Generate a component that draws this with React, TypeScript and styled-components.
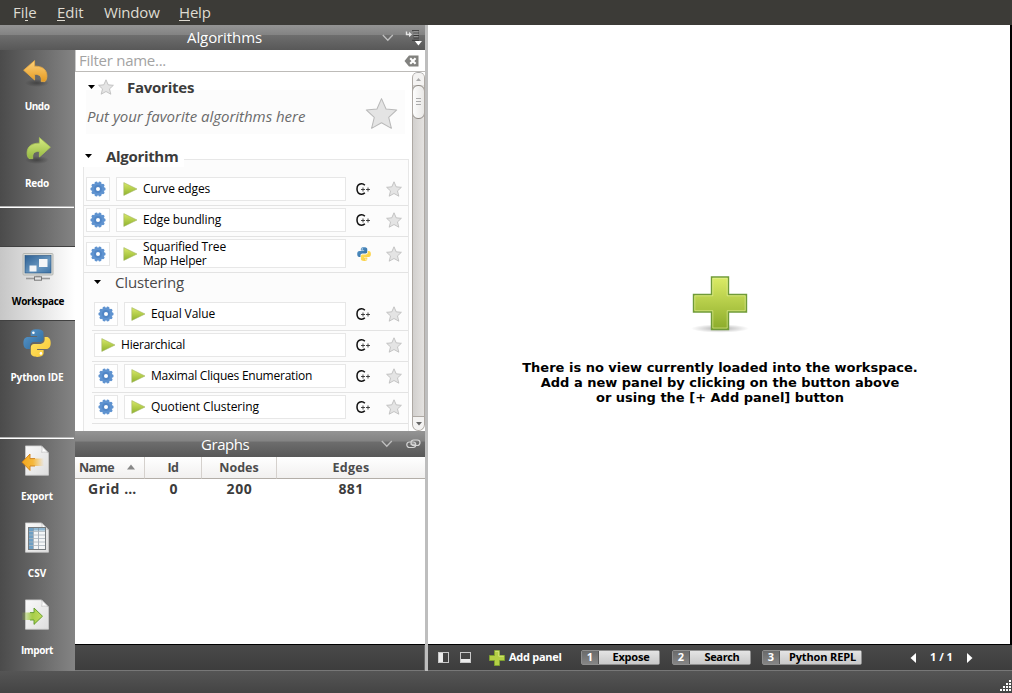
import React from 'react';
import styled, { createGlobalStyle } from 'styled-components';

const GlobalStyle = createGlobalStyle`
  * { box-sizing: border-box; }
  body { margin: 0; background: #fff; overflow: hidden; font-family: "Open Sans", "Noto Sans", sans-serif; color: #3c3c3c; }
  svg { display: block; flex: none; }
`;

const Window = styled.div`
  width: 1012px;
  height: 693px;
  display: flex;
  flex-direction: column;
`;

/* Text whose tracking is tuned per label */
const Label = styled.span<{ $ls?: number }>`
  letter-spacing: ${(p) => p.$ls ?? 0}px;
  white-space: pre;
`;

const MenuBar = styled.nav`
  height: 25px;
  flex: none;
  display: flex;
  padding-left: 13px;
  background: #3c3b37;
  color: #dfdbd2;
  font-size: 15px;
  line-height: 25px;
`;
const MenuItem = styled.div<{ $w: number }>`
  width: ${(p) => p.$w}px;
`;
const Mnemonic = styled.span`
  display: inline-block;
  height: 21px;
  line-height: 25px;
  vertical-align: top;
  border-bottom: 1px solid #dfdbd2;
`;

const Body = styled.div`
  height: 646px;
  flex: none;
  display: flex;
`;
const LeftPane = styled.div`
  width: 425px;
  display: flex;
  flex-direction: column;
`;
const LeftColumns = styled.div`
  flex: 1;
  display: flex;
  min-height: 0;
`;
const Splitter = styled.div`
  width: 3px;
  background: #bebebe;
`;

const TitleBar = styled.header<{ $h: number; $inset: number; $right: number; $gap: number }>`
  height: ${(p) => p.$h}px;
  flex: none;
  display: flex;
  align-items: center;
  gap: ${(p) => p.$gap}px;
  padding: 0 ${(p) => p.$right}px 0 ${(p) => p.$inset}px;
  background: linear-gradient(#949494 0, #838383 39%, #6d6d6d 42%, #585858 100%);
  color: #fff;
  font-size: 15px;
  line-height: 25px;
`;
const TitleText = styled.div`
  flex: 1;
`;

const SideBar = styled.aside`
  width: 75px;
  flex: none;
  display: flex;
  flex-direction: column;
  background: linear-gradient(90deg, #4b4b4b, #848484);
`;
const SideGroup = styled.div<{ $h: number; $top?: number; $line?: boolean }>`
  height: ${(p) => p.$h}px;
  flex: none;
  padding-top: ${(p) => p.$top ?? 0}px;
  position: relative;
  &::after {
    content: '';
    display: ${(p) => (p.$line ? 'block' : 'none')};
    position: absolute;
    left: 0;
    bottom: 0;
    width: 74px;
    height: 2px;
    background: linear-gradient(#b5b5b5 50%, #fff 50%);
  }
`;
const SideButton = styled.button<{ $h?: number; $active?: boolean; $gap: number }>`
  all: unset;
  box-sizing: border-box;
  width: 75px;
  height: ${(p) => p.$h ?? 77}px;
  display: flex;
  flex-direction: column;
  align-items: center;
  padding: ${(p) => (p.$active ? `${p.$gap}px 0 0 1px` : `${p.$gap}px 1px 0 0`)};
  font-size: 10px;
  font-weight: 700;
  line-height: 14px;
  color: ${(p) => (p.$active ? '#000' : '#fff')};
  background: ${(p) => (p.$active ? 'linear-gradient(90deg, #c6c6c6, #fff)' : 'none')};
  border-top: ${(p) => (p.$active ? '1px solid #414141' : '0')};
  border-bottom: ${(p) => (p.$active ? '1px solid #414141' : '0')};
`;
const SideIcon = styled.div<{ $h: number }>`
  height: ${(p) => p.$h}px;
  flex: none;
`;

const DockColumn = styled.div`
  width: 350px;
  display: flex;
  flex-direction: column;
`;
const FilterField = styled.div`
  height: 22px;
  flex: none;
  display: flex;
  align-items: center;
  justify-content: space-between;
  padding: 0 6px 0 4px;
  background: #fff;
  border-bottom: 1px solid #bdbbb8;
  box-shadow: inset 1px 0 #c9c9c9;
  color: #a3a3a3;
  font-size: 15px;
  line-height: 21px;
`;
const Browser = styled.div`
  height: 359px;
  flex: none;
  display: flex;
  justify-content: space-between;
  background: #fff;
`;
const Tree = styled.div`
  width: 334px;
  height: 359px;
  overflow: hidden;
  padding-left: 8px;
`;
const SectionHead = styled.div<{ $h: number; $pad: string }>`
  height: ${(p) => p.$h}px;
  display: flex;
  align-items: center;
  padding: ${(p) => p.$pad};
  font-size: 15px;
  font-weight: 700;
  line-height: 20px;
`;
const SectionIcon = styled.div<{ $gap: number }>`
  margin-right: ${(p) => p.$gap}px;
`;
const Favorites = styled.div`
  height: 44px;
  margin: 0 4px 12px 3px;
  display: flex;
  justify-content: space-between;
  padding-right: 7px;
  background: #fcfcfc;
  color: #6b6b6b;
  font-size: 15px;
  font-style: italic;
  line-height: 20px;
`;
const FavoritesHint = styled.div`
  padding: 16px 0 0 1px;
`;
const FavoritesStar = styled.div`
  padding-top: 7px;
`;
const HeadRule = styled.div`
  flex: 1;
  height: 8px;
  align-self: flex-end;
  margin: 0 0 -2px 6px;
  border: solid #e7e7e7;
  border-width: 1px 1px 0 0;
  background: #fcfcfc;
`;
const Group = styled.div`
  width: 326px;
  height: 300px;
  border: solid #e7e7e7;
  border-width: 0 1px;
  background: #fcfcfc;
  padding-top: 8px;
  font-size: 12px;
  color: #000;
`;
const SubHead = styled.div`
  height: 27px;
  display: flex;
  gap: 14px;
  padding: 0 0 0 10px;
  color: #4a4a4a;
  font-size: 15px;
  line-height: 18px;
`;
const SubHeadMarker = styled.div`
  padding-top: 7px;
`;
const AlgoRow = styled.div<{ $h: number; $indent?: boolean }>`
  height: ${(p) => p.$h}px;
  margin-left: ${(p) => (p.$indent ? 8 : 0)}px;
  padding: 2px 6px 4px 2px;
  display: flex;
  align-items: center;
  border-bottom: 1px solid #e3e3e3;
`;
const GearButton = styled.div`
  width: 24px;
  height: 24px;
  flex: none;
  margin-right: 6px;
  border: 1px solid #e7e7e7;
  background: #fff;
  display: grid;
  place-items: center;
`;
const RunButton = styled.div`
  flex: 1;
  height: 100%;
  border: 1px solid #e7e7e7;
  background: #fff;
  display: flex;
  align-items: center;
  gap: 5px;
  padding-left: 6px;
  line-height: 14px;
`;
const LangBadge = styled.div`
  width: 36px;
  margin-right: 4px;
  display: grid;
  place-items: center;
`;

const ScrollBar = styled.div`
  width: 13px;
  display: flex;
  flex-direction: column;
  border: 1px solid #aea9a4;
  border-top-color: #aaa;
  border-radius: 7px 7px 8px 8px;
  background: linear-gradient(90deg, #d2d0ce, #e4e2e0);
  overflow: hidden;
`;
const ScrollArrow = styled.div<{ $h: number; $down?: boolean }>`
  height: ${(p) => p.$h}px;
  flex: none;
  display: grid;
  place-items: center;
  background: #f4f3f2;
  ${(p) => p.$down && 'margin-top: auto; border-top: 1px solid #aea9a4; border-radius: 0 0 7px 7px;'}
`;
const ScrollThumb = styled.div`
  height: 34px;
  margin: 0 -1px;
  flex: none;
  border: 1px solid #918c87;
  border-radius: 6px;
  background: linear-gradient(90deg, #fdfdfd, #e9e8e6);
  display: grid;
  place-items: center;
`;

const GraphTable = styled.table`
  width: 350px;
  table-layout: fixed;
  border-collapse: separate;
  border-spacing: 0;
  font-weight: 700;
  color: #3c3c3c;
  text-align: center;
  background: #fff;
`;
const HeadCell = styled.th<{ $w: number; $first?: boolean }>`
  width: ${(p) => p.$w}px;
  height: 22px;
  padding: 1px 0 0 ${(p) => (p.$first ? 4 : 0)}px;
  text-align: ${(p) => (p.$first ? 'left' : 'center')};
  font-size: 12.5px;
  line-height: 20px;
  color: #4c4c4c;
  border-bottom: 1px solid #b3aea8;
  border-right: 1px solid #d5d1cd;
  background: linear-gradient(#fff, #f1f0ef);
  &:last-child { border-right: 0; }
`;
const HeadInner = styled.div`
  display: flex;
  align-items: center;
  justify-content: space-between;
  padding-right: 9px;
`;
const SortMark = styled.div`
  margin-bottom: 3px;
`;
const Cell = styled.td<{ $first?: boolean }>`
  height: 20px;
  padding: 0 0 0 ${(p) => (p.$first ? 13 : 0)}px;
  text-align: ${(p) => (p.$first ? 'left' : 'center')};
  font-size: 14px;
  line-height: 20px;
`;
const TableArea = styled.div`
  flex: 1;
  background: #fff;
`;
const DockFooter = styled.div`
  height: 27px;
  flex: none;
  border-top: 1px solid #000;
  border-bottom: 1px solid #777;
  background: linear-gradient(#494949, #3d3d3d);
  box-shadow: inset -1px 0 #666;
`;

const Workspace = styled.main`
  width: 584px;
  display: flex;
  flex-direction: column;
`;
const Canvas = styled.section`
  flex: 1;
  border-right: 2px solid #000;
  background: #fff;
  display: flex;
  flex-direction: column;
  align-items: center;
  padding: 248px 0 0 2px;
  color: #000;
  font: 700 13px/15px "DejaVu Sans", sans-serif;
  text-align: center;
`;
const Message = styled.p`
  margin: 27px 0 0;
`;
const PanelBar = styled.footer`
  height: 27px;
  flex: none;
  display: flex;
  align-items: center;
  padding-left: 10px;
  border-top: 1px solid #000;
  border-bottom: 1px solid #777;
  background: linear-gradient(#494949, #3d3d3d);
  color: #fff;
  font-size: 11px;
  font-weight: 700;
  line-height: 14px;
`;
const BarLabel = styled(Label)`
  display: block;
  padding-bottom: 2px;
`;
const AddPanel = styled.div`
  display: flex;
  align-items: center;
  gap: 4px;
  width: 92px;
  margin-left: 18px;
`;
const PanelTab = styled.div<{ $w: number; $gap: number }>`
  width: ${(p) => p.$w}px;
  height: 15px;
  margin-right: ${(p) => p.$gap}px;
  display: flex;
  border: 1px solid #8e8e8e;
  border-radius: 2px;
  line-height: 12px;
  text-align: center;
`;
const TabNumber = styled.div`
  width: 17px;
  background: linear-gradient(#6a6a6a, #858585);
  border-right: 1px solid #555;
`;
const TabName = styled.div`
  flex: 1;
  padding-left: 4px;
  color: #000;
  background: linear-gradient(#e4e4e4, #c8c8c8);
`;
const Pager = styled.div`
  display: flex;
  align-items: center;
  gap: 14px;
`;
const StatusBar = styled.div`
  height: 22px;
  flex: none;
  display: flex;
  justify-content: flex-end;
  align-items: flex-end;
  padding: 0 1px 2px 0;
  background: linear-gradient(#555, #444);
`;

const STAR = 'M8 .8 10.2 5.8 15.4 6.3 11.5 9.9 12.8 15.2 8 12.5 3.2 15.2 4.5 9.9 .6 6.3 5.8 5.8Z';
const Star = ({ size = 16 }: { size?: number }) => (
  <svg width={size} height={size} viewBox="0 0 16 16">
    <path d={STAR} fill="#e4e4e4" stroke="#b9b9b9" strokeWidth={size > 20 ? 0.5 : 0.8} strokeLinejoin="round" />
  </svg>
);

const Triangle = () => (
  <svg width="7" height="4" viewBox="0 0 7 4"><path d="M0 0H7L3.5 4Z" fill="#000" /></svg>
);

const Gear = () => (
  <svg width="16" height="16" viewBox="0 0 16 16">
    <g fill="#5f93d0">
      {Array.from({ length: 10 }, (_, i) => (
        <circle key={i} cx="8" cy="2" r="1.65" transform={`rotate(${i * 36 + 18} 8 8)`} />
      ))}
      <circle cx="8" cy="8" r="6.2" />
    </g>
    <circle cx="8" cy="8" r="3.9" fill="#5186c6" />
    <circle cx="8" cy="8" r="2" fill="#fff" />
  </svg>
);

const Play = () => (
  <svg width="15" height="14" viewBox="0 0 15 14">
    <defs>
      <linearGradient id="play" x1="0" y1="0" x2="0" y2="1"><stop stopColor="#d8e868" /><stop offset="1" stopColor="#8fb32d" /></linearGradient>
    </defs>
    <path d="M.8.6 14 7 .8 13.4Z" fill="url(#play)" stroke="#a3b565" strokeWidth=".6" />
  </svg>
);

const Cpp = () => (
  <svg width="16" height="14" viewBox="1 0 16 14">
    <path d="M9.8 3.2C8.8 2 7.6 1.7 6.3 1.8 3.5 2 2 4.1 2 7S3.5 12 6.3 12.2C7.7 12.3 8.9 11.9 9.8 10.8" fill="none" stroke="#111" strokeWidth="1.5" />
    <path d="M6 7.5H10M8 5.5V9.5M11 7.5H15M13 5.5V9.5" stroke="#333" strokeWidth=".9" />
  </svg>
);

const Python = ({ size }: { size: number }) => (
  <svg width={size} height={size} viewBox="0 0 28 28">
    <defs>
      <linearGradient id="pyb" x1="0" y1="0" x2="1" y2="1"><stop stopColor="#5a9bd0" /><stop offset="1" stopColor="#2d6698" /></linearGradient>
      <linearGradient id="pyy" x1="0" y1="0" x2="1" y2="1"><stop stopColor="#ffe468" /><stop offset="1" stopColor="#f9c832" /></linearGradient>
    </defs>
    <path d="M13.8.3C9.5.3 7.7 1.6 7.7 4V7H14.2V8H5C2 8 .4 10.3.4 14S2 20 4.6 20H7V16.7C7 14.6 8.7 13 10.8 13H17.2C19.1 13 20.5 11.5 20.5 9.7V4C20.5 1.6 18 .3 13.8.3Z" fill="url(#pyb)" />
    <path d="M14.4 27.9C18.7 27.9 20.6 26.5 20.6 24.1V21H14.1V20H23.2C26.2 20 27.7 17.6 27.7 14S26.2 8 23.6 8H21.6V11C21.6 13 19.6 14.9 17.5 14.9H11C9.2 14.9 7.8 16.4 7.8 18.2V24C7.8 26.4 10.2 27.9 14.4 27.9Z" fill="url(#pyy)" />
    <circle cx="10.4" cy="3.8" r="1.3" fill="#fff" />
    <circle cx="17.9" cy="24.4" r="1.3" fill="#fff" />
  </svg>
);

const BentArrow = ({ redo }: { redo?: boolean }) => {
  const id = redo ? 'redo' : 'undo';
  return (
    <svg width="28" height="28" viewBox="0 0 28 28">
      <defs>
        <linearGradient id={id} x1="0" y1="0" x2="0" y2="1">
          <stop stopColor={redo ? '#d8ec84' : '#ffd27c'} />
          <stop offset="1" stopColor={redo ? '#94b840' : '#e59a20'} />
        </linearGradient>
        <radialGradient id={`${id}s`}><stop stopColor="#000" stopOpacity=".35" /><stop offset="1" stopColor="#000" stopOpacity="0" /></radialGradient>
      </defs>
      <g transform={redo ? 'translate(28 0) scale(-1 1)' : undefined}>
        <ellipse cx="14" cy="23" rx="12" ry="4" fill={`url(#${id}s)`} />
        <path
          d="M0.6 10.2 11.6.6V6.2C19.5 6 23.6 9.5 23.9 15.5 24 18.3 23.2 20.3 22 21.6H18.2C18.9 16.5 16.8 14.2 11.6 14.4V20Z"
          fill={`url(#${id})`} stroke={redo ? '#a8c656' : '#e9ab42'} strokeWidth=".8" strokeLinejoin="round"
        />
      </g>
    </svg>
  );
};

const Monitor = () => (
  <svg width="32" height="28" viewBox="0 0 32 28">
    <defs><linearGradient id="scr" x1="0" y1="0" x2="1" y2="1"><stop stopColor="#2b5f94" /><stop offset=".6" stopColor="#6a98c0" /><stop offset="1" stopColor="#3d73a6" /></linearGradient></defs>
    <rect x="1" y=".5" width="30" height="21.5" rx="1" fill="#d8dad6" stroke="#b4b6b2" />
    <rect x="3" y="2.5" width="26" height="17.5" fill="url(#scr)" stroke="#255380" strokeWidth=".6" />
    <rect x="17" y="6" width="8.5" height="8" fill="#f3f5f7" />
    <rect x="7.5" y="12.5" width="7" height="6" fill="#f3f5f7" />
    <rect x="14" y="22" width="4" height="3" fill="#c3c3c3" />
    <path d="M4 25.5H28" stroke="#999" strokeWidth="1.6" />
    <rect x="12.5" y="23.8" width="7" height="3.4" fill="#e3e3e3" stroke="#777" />
  </svg>
);

const Sheet = ({ kind }: { kind: 'export' | 'csv' | 'import' }) => (
  <svg width="32" height="32" viewBox="0 0 32 32">
    <defs>
      <linearGradient id="page" x1="0" y1="0" x2="1" y2="1"><stop stopColor="#fafafa" /><stop offset="1" stopColor="#dedede" /></linearGradient>
      <linearGradient id="oarrow" x1="0" x2="1"><stop stopColor="#f3a71c" /><stop offset=".5" stopColor="#f5b83c" /><stop offset="1" stopColor="#f5b83c" stopOpacity="0" /></linearGradient>
      <linearGradient id="garrow" x1="0" x2="1"><stop stopColor="#9ac343" stopOpacity=".1" /><stop offset=".5" stopColor="#a6cd48" /><stop offset="1" stopColor="#c2dc5c" /></linearGradient>
    </defs>
    <path d="M4.5.9H20.5L27.5 8V30.2H4.5Z" fill="url(#page)" stroke="#c9c9c9" strokeWidth=".8" />
    <path d="M20.5.9C21.4 3 21.2 5.2 20.6 7.4 23 6.8 25.5 6.8 27.5 8Z" fill="#fff" stroke="#b7b7b7" strokeWidth=".6" />
    {kind === 'export' && <path d="M1 17.2 9 9V13.6H23V21H9V25.4Z" fill="url(#oarrow)" />}
    {kind === 'export' && <path d="M14 13.6H9V9L1 17.2 9 25.4V21H14" fill="none" stroke="#ce7f1a" strokeWidth=".9" />}
    {kind === 'import' && <path d="M1 13.6H13V9L21.5 17.2 13 25.4V21H1Z" fill="url(#garrow)" />}
    {kind === 'import' && <path d="M9 13.6H13V9L21.5 17.2 13 25.4V21H9" fill="none" stroke="#5d9a2a" strokeWidth=".9" />}
    {kind === 'csv' && (
      <g>
        <rect x="7.5" y="5.5" width="17" height="22" fill="#f4f6f7" stroke="#767b7e" />
        <rect x="8" y="6" width="16" height="2.6" fill="#8fb6d0" />
        <rect x="8" y="6" width="4" height="21" fill="#6d9fc4" />
        <path d="M12.5 6V27M17.5 6V27" stroke="#789" strokeWidth=".6" />
        <path d="M8 9.5H24M8 13H24M8 16.5H24M8 20H24M8 23.5H24" stroke="#a9b5bd" strokeWidth=".8" />
      </g>
    )}
  </svg>
);

const PlusLarge = () => (
  <svg width="60" height="60" viewBox="0 0 60 60">
    <defs>
      <linearGradient id="plus" x1="0" y1="0" x2="0" y2="1"><stop stopColor="#dcec66" /><stop offset="1" stopColor="#8bab2a" /></linearGradient>
      <radialGradient id="shade"><stop stopColor="#000" stopOpacity=".32" /><stop offset="1" stopColor="#000" stopOpacity="0" /></radialGradient>
    </defs>
    <ellipse cx="30" cy="55.5" rx="29" ry="4.2" fill="url(#shade)" />
    <path d="M21.5 4H38.5V21.5H56.5V39H38.5V56.5H21.5V39H3.5V21.5H21.5Z" fill="url(#plus)" stroke="#6f9a38" strokeWidth="1.4" />
    <path d="M22.8 5.3H37.2V22.8H55.2V37.7H37.2V55H22.8V37.7H4.8V22.8H22.8Z" fill="none" stroke="#e7f2a2" strokeOpacity=".55" />
  </svg>
);

const PlusSmall = () => (
  <svg width="16" height="16" viewBox="0 0 16 16">
    <path d="M5.5.5H10.5V5.5H15.5V10.5H10.5V15.5H5.5V10.5H.5V5.5H5.5Z" fill="#b4d045" stroke="#7ea02f" />
    <path d="M6.2 1.3H9.8V6.2H14.7" fill="none" stroke="#d7e77c" />
  </svg>
);

const Chevron = () => (
  <svg width="12" height="8" viewBox="0 0 12 8"><path d="M.8 1 5.8 6.2 10.8 1" fill="none" stroke="#bfbfbf" strokeWidth="1.3" /></svg>
);

const InsertList = () => (
  <svg width="17" height="19" viewBox="0 -1.5 17 19">
    <path d="M1.5 2V5H5.2" fill="none" stroke="#e6e6e6" strokeWidth="1.4" />
    <path d="M4 2.2 7 5 4 7.8Z" fill="#e6e6e6" />
    <path d="M7 1.2H14M8.5 3.5H14M8.5 6H14M8.5 8.5H14M7 10.8H14" stroke="#383838" strokeWidth="1" />
    <path d="M8.5 2.3H13M9 4.7H13M9 7.2H13" stroke="#a9a9a9" strokeWidth=".8" />
    <path d="M9.8 11.5H17L13.4 16Z" fill="#fff" />
  </svg>
);

const Links = () => (
  <svg width="15" height="10" viewBox="0 0 15 10">
    <g fill="none" stroke="#d5d5d5" strokeWidth="1.2">
      <rect x=".8" y="3" width="9" height="5.5" rx="2.7" />
      <rect x="5" y="1" width="9" height="5.5" rx="2.7" />
      <path d="M4.5 5.2H10" />
    </g>
  </svg>
);

const ClearIcon = () => (
  <svg width="15" height="12" viewBox="0 0 15 12">
    <path d="M5 .5H14.5V11.5H5L.5 6Z" fill="#82827f" />
    <path d="M6.2 3.2 11.6 8.8M11.6 3.2 6.2 8.8" stroke="#fff" strokeWidth="2.1" />
  </svg>
);

const Grip = () => (
  <svg width="11" height="11" viewBox="0 0 11 11" fill="#fff">
    {[0, 1, 2, 3].flatMap((r) =>
      Array.from({ length: r + 1 }, (_, i) => <rect key={`${r}-${i}`} x={9 - i * 3} y={r * 3} width="2" height="2" />),
    )}
  </svg>
);

type Algo = { lines: [string, number][]; gear?: boolean; python?: boolean; h?: number };

const TOP_LEVEL: Algo[] = [
  { lines: [['Curve edges', -0.15]], gear: true },
  { lines: [['Edge bundling', -0.13]], gear: true },
  { lines: [['Squarified Tree', -0.14], ['Map Helper', -0.2]], gear: true, python: true, h: 36 },
];
const CLUSTERING: Algo[] = [
  { lines: [['Equal Value', -0.1]], gear: true },
  { lines: [['Hierarchical', -0.22]] },
  { lines: [['Maximal Cliques Enumeration', -0.23]], gear: true },
  { lines: [['Quotient Clustering', -0.07]], gear: true },
];

const Algorithm = ({ algo, indent }: { algo: Algo; indent?: boolean }) => (
  <AlgoRow $h={algo.h ?? 31} $indent={indent}>
    {algo.gear && <GearButton><Gear /></GearButton>}
    <RunButton>
      <Play />
      <div>{algo.lines.map(([text, ls]) => <div key={text}><Label $ls={ls}>{text}</Label></div>)}</div>
    </RunButton>
    <LangBadge>{algo.python ? <Python size={14} /> : <Cpp />}</LangBadge>
    <Star />
  </AlgoRow>
);

export default function App() {
  return (
    <Window>
      <GlobalStyle />
      <MenuBar>
        <MenuItem $w={44}>Fi<Mnemonic>l</Mnemonic>e</MenuItem>
        <MenuItem $w={47}><Mnemonic>E</Mnemonic>dit</MenuItem>
        <MenuItem $w={75}><Label $ls={-0.18}>Window</Label></MenuItem>
        <MenuItem $w={60}><Label $ls={-0.2}><Mnemonic>H</Mnemonic>elp</Label></MenuItem>
      </MenuBar>

      <Body>
        <LeftPane>
          <TitleBar $h={25} $inset={187} $right={3} $gap={11}>
            <TitleText><Label $ls={-0.09}>Algorithms</Label></TitleText>
            <Chevron />
            <InsertList />
          </TitleBar>
          <LeftColumns>
            <SideBar>
              <SideGroup $h={158} $line>
                <SideButton $gap={10}>
                  <SideIcon $h={39}><BentArrow /></SideIcon>
                  <Label $ls={-0.5}>Undo</Label>
                </SideButton>
                <SideButton $gap={10}>
                  <SideIcon $h={39}><BentArrow redo /></SideIcon>
                  <Label $ls={-0.25}>Redo</Label>
                </SideButton>
              </SideGroup>
              <SideGroup $h={231} $top={38} $line>
                <SideButton $active $h={75} $gap={6}>
                  <SideIcon $h={41}><Monitor /></SideIcon>
                  <Label $ls={-0.28}>Workspace</Label>
                </SideButton>
                <SideButton $gap={8}>
                  <SideIcon $h={41}><Python size={28} /></SideIcon>
                  <Label $ls={-0.15}>Python IDE</Label>
                </SideButton>
              </SideGroup>
              <SideGroup $h={232} $top={6}>
                <SideButton $gap={0}>
                  <SideIcon $h={44}><Sheet kind="export" /></SideIcon>
                  <Label $ls={-0.13}>Export</Label>
                </SideButton>
                <SideButton $gap={0}>
                  <SideIcon $h={44}><Sheet kind="csv" /></SideIcon>
                  <Label>CSV</Label>
                </SideButton>
                <SideButton $gap={0}>
                  <SideIcon $h={44}><Sheet kind="import" /></SideIcon>
                  <Label $ls={-0.4}>Import</Label>
                </SideButton>
              </SideGroup>
            </SideBar>

            <DockColumn>
              <FilterField>
                <Label $ls={-0.27}>Filter name...</Label>
                <ClearIcon />
              </FilterField>
              <Browser>
                <Tree>
                  <SectionHead $h={18} $pad="12px 0 0 5px">
                    <SectionIcon $gap={3}><Triangle /></SectionIcon>
                    <SectionIcon $gap={13}><Star /></SectionIcon>
                    <Label $ls={-0.25}>Favorites</Label>
                  </SectionHead>
                  <Favorites>
                    <FavoritesHint><Label $ls={-0.02}>Put your favorite algorithms here</Label></FavoritesHint>
                    <FavoritesStar><Star size={33} /></FavoritesStar>
                  </Favorites>
                  <SectionHead $h={21} $pad="0 0 2px 2px">
                    <SectionIcon $gap={14}><Triangle /></SectionIcon>
                    <Label $ls={-0.32}>Algorithm</Label>
                    <HeadRule />
                  </SectionHead>
                  <Group>
                    {TOP_LEVEL.map((a) => <Algorithm key={a.lines[0][0]} algo={a} />)}
                    <SubHead>
                      <SubHeadMarker><Triangle /></SubHeadMarker>
                      <Label $ls={-0.16}>Clustering</Label>
                    </SubHead>
                    {CLUSTERING.map((a) => <Algorithm key={a.lines[0][0]} algo={a} indent />)}
                  </Group>
                </Tree>
                <ScrollBar>
                  <ScrollArrow $h={12}>
                    <svg width="5" height="3" viewBox="0 0 5 3"><path d="M0 3H5L2.5 0Z" fill="#aaa" /></svg>
                  </ScrollArrow>
                  <ScrollThumb>
                    <svg width="5" height="8" viewBox="0 0 5 8"><path d="M0 .5H5M0 3.5H5M0 6.5H5" stroke="#aaa" /></svg>
                  </ScrollThumb>
                  <ScrollArrow $h={14} $down>
                    <svg width="6" height="4" viewBox="0 0 6 4"><path d="M0 0H6L3 3.5Z" fill="#666" /></svg>
                  </ScrollArrow>
                </ScrollBar>
              </Browser>

              <TitleBar $h={26} $inset={126} $right={4} $gap={13}>
                <TitleText><Label $ls={-0.45}>Graphs</Label></TitleText>
                <Chevron />
                <Links />
              </TitleBar>
              <GraphTable>
                <thead>
                  <tr>
                    <HeadCell $w={70} $first>
                      <HeadInner>
                        <Label $ls={-0.6}>Name</Label>
                        <SortMark>
                          <svg width="8" height="6" viewBox="0 0 8 6"><path d="M0 5.5H8L4 .5Z" fill="#888" /></svg>
                        </SortMark>
                      </HeadInner>
                    </HeadCell>
                    <HeadCell $w={57}><Label $ls={-0.5}>Id</Label></HeadCell>
                    <HeadCell $w={75}><Label>Nodes</Label></HeadCell>
                    <HeadCell $w={148}><Label $ls={0.3}>Edges</Label></HeadCell>
                  </tr>
                </thead>
                <tbody>
                  <tr>
                    <Cell $first><Label $ls={0.6}>Grid …</Label></Cell>
                    <Cell>0</Cell>
                    <Cell><Label $ls={0.6}>200</Label></Cell>
                    <Cell><Label $ls={0.4}>881</Label></Cell>
                  </tr>
                </tbody>
              </GraphTable>
              <TableArea />
              <DockFooter />
            </DockColumn>
          </LeftColumns>
        </LeftPane>
        <Splitter />

        <Workspace>
          <Canvas>
            <PlusLarge />
            <Message>
              There is no view currently loaded into the workspace.<br />
              Add a new panel by clicking on the button above<br />
              or using the [+ Add panel] button
            </Message>
          </Canvas>
          <PanelBar>
            <svg width="33" height="11" viewBox="0 0 33 11">
              <rect x=".5" y=".5" width="10" height="10" fill="none" stroke="#c9c9c9" />
              <rect x="1" y="1" width="4" height="9" fill="#ededed" />
              <rect x="22.5" y=".5" width="10" height="10" fill="none" stroke="#c9c9c9" />
              <rect x="23" y="7" width="9" height="3" fill="#ededed" />
            </svg>
            <AddPanel><PlusSmall /><BarLabel $ls={-0.29}>Add panel</BarLabel></AddPanel>
            <PanelTab $w={79} $gap={12}><TabNumber>1</TabNumber><TabName><Label $ls={-0.2}>Expose</Label></TabName></PanelTab>
            <PanelTab $w={79} $gap={11}><TabNumber>2</TabNumber><TabName><Label $ls={-0.35}>Search</Label></TabName></PanelTab>
            <PanelTab $w={100} $gap={48}><TabNumber>3</TabNumber><TabName><Label $ls={-0.14}>Python REPL</Label></TabName></PanelTab>
            <Pager>
              <svg width="6" height="10" viewBox="0 0 6 10"><path d="M6 0V10L.5 5Z" fill="#fff" /></svg>
              <BarLabel>1 / 1</BarLabel>
              <svg width="6" height="10" viewBox="0 0 6 10"><path d="M0 0V10L5.5 5Z" fill="#fff" /></svg>
            </Pager>
          </PanelBar>
        </Workspace>
      </Body>
      <StatusBar><Grip /></StatusBar>
    </Window>
  );
}
